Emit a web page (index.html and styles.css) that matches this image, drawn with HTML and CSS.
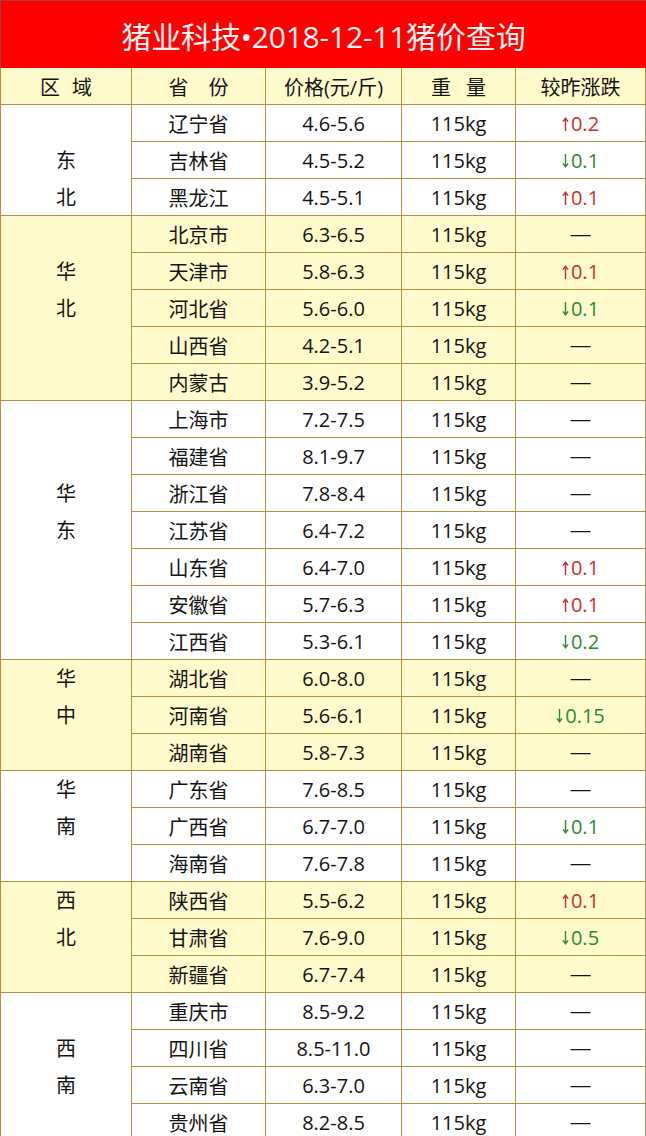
FILE: index.html
```html
<!DOCTYPE html>
<html lang="zh-CN">
<head>
<meta charset="utf-8">
<title>猪价查询</title>
<link rel="stylesheet" href="styles.css">
</head>
<body>
<div class="sheet">
  <div class="title">猪业科技•2018-12-11猪价查询</div>
  <div class="grid">
    <div class="c head"><span class="sp g12"><span>区</span><span>域</span></span></div>
    <div class="c head"><span class="sp g20"><span>省</span><span>份</span></span></div>
    <div class="c head">价格(元/斤)</div>
    <div class="c head"><span class="sp g15"><span>重</span><span>量</span></span></div>
    <div class="c head">较昨涨跌</div>

    <!-- 东北 -->
    <div class="c region r3 at2"><span class="ch">东</span><span class="ch">北</span></div>
    <div class="c">辽宁省</div><div class="c">4.6-5.6</div><div class="c">115kg</div><div class="c up"><span><svg class="ar" viewBox="0 0 7 14" width="7" height="14"><path d="M3.5 14V1.2M0.9 4.6L3.5 1.2L6.1 4.6"/></svg>0.2</span></div>
    <div class="c">吉林省</div><div class="c">4.5-5.2</div><div class="c">115kg</div><div class="c down"><span><svg class="ar" viewBox="0 0 7 14" width="7" height="14"><path d="M3.5 0V12.8M0.9 9.4L3.5 12.8L6.1 9.4"/></svg>0.1</span></div>
    <div class="c">黑龙江</div><div class="c">4.5-5.1</div><div class="c">115kg</div><div class="c up"><span><svg class="ar" viewBox="0 0 7 14" width="7" height="14"><path d="M3.5 14V1.2M0.9 4.6L3.5 1.2L6.1 4.6"/></svg>0.1</span></div>

    <!-- 华北 -->
    <div class="c y region r5 at2"><span class="ch">华</span><span class="ch">北</span></div>
    <div class="c y">北京市</div><div class="c y">6.3-6.5</div><div class="c y">115kg</div><div class="c y flat">—</div>
    <div class="c y">天津市</div><div class="c y">5.8-6.3</div><div class="c y">115kg</div><div class="c y up"><span><svg class="ar" viewBox="0 0 7 14" width="7" height="14"><path d="M3.5 14V1.2M0.9 4.6L3.5 1.2L6.1 4.6"/></svg>0.1</span></div>
    <div class="c y">河北省</div><div class="c y">5.6-6.0</div><div class="c y">115kg</div><div class="c y down"><span><svg class="ar" viewBox="0 0 7 14" width="7" height="14"><path d="M3.5 0V12.8M0.9 9.4L3.5 12.8L6.1 9.4"/></svg>0.1</span></div>
    <div class="c y">山西省</div><div class="c y">4.2-5.1</div><div class="c y">115kg</div><div class="c y flat">—</div>
    <div class="c y">内蒙古</div><div class="c y">3.9-5.2</div><div class="c y">115kg</div><div class="c y flat">—</div>

    <!-- 华东 -->
    <div class="c region r7 at3"><span class="ch">华</span><span class="ch">东</span></div>
    <div class="c">上海市</div><div class="c">7.2-7.5</div><div class="c">115kg</div><div class="c flat">—</div>
    <div class="c">福建省</div><div class="c">8.1-9.7</div><div class="c">115kg</div><div class="c flat">—</div>
    <div class="c">浙江省</div><div class="c">7.8-8.4</div><div class="c">115kg</div><div class="c flat">—</div>
    <div class="c">江苏省</div><div class="c">6.4-7.2</div><div class="c">115kg</div><div class="c flat">—</div>
    <div class="c">山东省</div><div class="c">6.4-7.0</div><div class="c">115kg</div><div class="c up"><span><svg class="ar" viewBox="0 0 7 14" width="7" height="14"><path d="M3.5 14V1.2M0.9 4.6L3.5 1.2L6.1 4.6"/></svg>0.1</span></div>
    <div class="c">安徽省</div><div class="c">5.7-6.3</div><div class="c">115kg</div><div class="c up"><span><svg class="ar" viewBox="0 0 7 14" width="7" height="14"><path d="M3.5 14V1.2M0.9 4.6L3.5 1.2L6.1 4.6"/></svg>0.1</span></div>
    <div class="c">江西省</div><div class="c">5.3-6.1</div><div class="c">115kg</div><div class="c down"><span><svg class="ar" viewBox="0 0 7 14" width="7" height="14"><path d="M3.5 0V12.8M0.9 9.4L3.5 12.8L6.1 9.4"/></svg>0.2</span></div>

    <!-- 华中 -->
    <div class="c y region r3 at1"><span class="ch">华</span><span class="ch">中</span></div>
    <div class="c y">湖北省</div><div class="c y">6.0-8.0</div><div class="c y">115kg</div><div class="c y flat">—</div>
    <div class="c y">河南省</div><div class="c y">5.6-6.1</div><div class="c y">115kg</div><div class="c y down"><span><svg class="ar" viewBox="0 0 7 14" width="7" height="14"><path d="M3.5 0V12.8M0.9 9.4L3.5 12.8L6.1 9.4"/></svg>0.15</span></div>
    <div class="c y">湖南省</div><div class="c y">5.8-7.3</div><div class="c y">115kg</div><div class="c y flat">—</div>

    <!-- 华南 -->
    <div class="c region r3 at1"><span class="ch">华</span><span class="ch">南</span></div>
    <div class="c">广东省</div><div class="c">7.6-8.5</div><div class="c">115kg</div><div class="c flat">—</div>
    <div class="c">广西省</div><div class="c">6.7-7.0</div><div class="c">115kg</div><div class="c down"><span><svg class="ar" viewBox="0 0 7 14" width="7" height="14"><path d="M3.5 0V12.8M0.9 9.4L3.5 12.8L6.1 9.4"/></svg>0.1</span></div>
    <div class="c">海南省</div><div class="c">7.6-7.8</div><div class="c">115kg</div><div class="c flat">—</div>

    <!-- 西北 -->
    <div class="c y region r3 at1"><span class="ch">西</span><span class="ch">北</span></div>
    <div class="c y">陕西省</div><div class="c y">5.5-6.2</div><div class="c y">115kg</div><div class="c y up"><span><svg class="ar" viewBox="0 0 7 14" width="7" height="14"><path d="M3.5 14V1.2M0.9 4.6L3.5 1.2L6.1 4.6"/></svg>0.1</span></div>
    <div class="c y">甘肃省</div><div class="c y">7.6-9.0</div><div class="c y">115kg</div><div class="c y down"><span><svg class="ar" viewBox="0 0 7 14" width="7" height="14"><path d="M3.5 0V12.8M0.9 9.4L3.5 12.8L6.1 9.4"/></svg>0.5</span></div>
    <div class="c y">新疆省</div><div class="c y">6.7-7.4</div><div class="c y">115kg</div><div class="c y flat">—</div>

    <!-- 西南 -->
    <div class="c region r4 at2"><span class="ch">西</span><span class="ch">南</span></div>
    <div class="c">重庆市</div><div class="c">8.5-9.2</div><div class="c">115kg</div><div class="c flat">—</div>
    <div class="c">四川省</div><div class="c">8.5-11.0</div><div class="c">115kg</div><div class="c flat">—</div>
    <div class="c">云南省</div><div class="c">6.3-7.0</div><div class="c">115kg</div><div class="c flat">—</div>
    <div class="c">贵州省</div><div class="c">8.2-8.5</div><div class="c">115kg</div><div class="c flat">—</div>
  </div>
</div>
</body>
</html>
```
FILE: styles.css
```css
html, body {
  margin: 0;
  padding: 0;
  overflow: hidden;
  background: #ffffff;
}

.sheet {
  width: 646px;
  font-family: "Open Sans", "Noto Sans CJK SC", sans-serif;
  color: #141414;
}

.title {
  height: 68px;
  box-sizing: border-box;
  border-top: 1px solid #b03a3a;
  border-left: 1px solid #b03a3a;
  background: #ff0000;
  color: #fff4f4;
  font-size: 30px;
  display: flex;
  align-items: center;
  justify-content: center;
  padding-top: 1px;
  letter-spacing: -0.2px;
}

.grid {
  display: grid;
  grid-template-columns: 131px 134px 136px 114px 130px;
  grid-auto-rows: 37px;
  border-left: 1px solid #b4913f;
}

.c {
  box-sizing: border-box;
  border-right: 1px solid #b4913f;
  border-bottom: 1px solid #b4913f;
  display: flex;
  align-items: center;
  justify-content: center;
  font-size: 20px;
  background: #ffffff;
  white-space: nowrap;
}

.head {
  background: #fffbcc;
}

.y {
  background: #fffbcc;
}

.sp {
  display: flex;
}

.g12 { gap: 12px; }
.g15 { gap: 15px; }
.g20 { gap: 20px; }

.region {
  grid-column: 1;
  flex-direction: column;
  justify-content: flex-start;
}

.r3 { grid-row: span 3; }
.r4 { grid-row: span 4; }
.r5 { grid-row: span 5; }
.r7 { grid-row: span 7; }

.at1 { padding-top: 0; }
.at2 { padding-top: 37px; }
.at3 { padding-top: 74px; }

.ch {
  display: block;
  line-height: 37px;
  height: 37px;
}

.up {
  color: #c8302e;
}

.down {
  color: #2f8a2f;
}

.ar {
  display: inline;
  vertical-align: baseline;
  fill: none;
  stroke: currentColor;
  stroke-width: 1.4;
  margin-right: 2px;
}

.flat {
  font-family: "Liberation Sans", sans-serif;
  color: #141414;
}
```
